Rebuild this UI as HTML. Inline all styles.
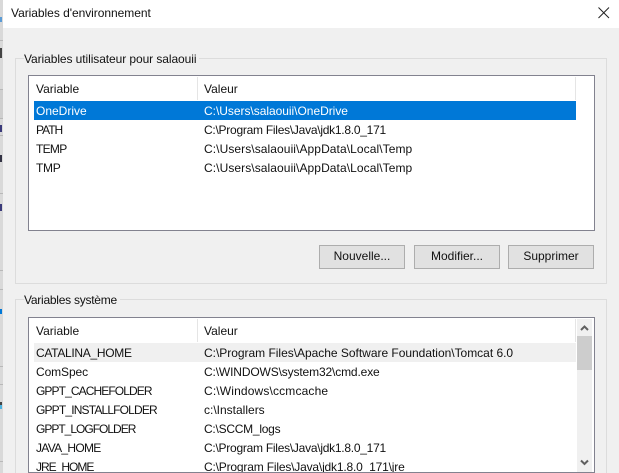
<!DOCTYPE html>
<html><head><meta charset="utf-8"><style>
html,body{margin:0;padding:0;width:619px;height:473px;overflow:hidden;background:#f0f0f0}
body{position:relative;font-family:"Liberation Sans",sans-serif;font-size:12px;color:#111}
div{position:absolute;box-sizing:border-box}
.t{white-space:nowrap;line-height:16px;height:16px}
.btn{background:#e1e1e1;border:1px solid #adadad;height:24px;width:86px;text-align:center;line-height:21px;top:245px}
.m{left:0;width:3px;height:1px;background:#b8b8b8}
.d{left:0;width:2px;background:#444}
</style></head><body>
<div style="left:0;top:0;width:3px;height:473px;background:#d9d9d9"></div>
<div style="left:0;top:90px;width:3px;height:28px;background:#cfcfcf"></div>
<div class="m" style="top:40px"></div><div class="m" style="top:89px"></div><div class="m" style="top:118px"></div><div class="m" style="top:135px"></div><div class="m" style="top:193px"></div><div class="m" style="top:270px"></div><div class="m" style="top:289px"></div><div class="m" style="top:366px"></div><div class="m" style="top:384px"></div><div class="m" style="top:461px"></div>
<div class="d" style="top:17px;height:5px;background:#5b9bd5"></div>
<div class="d" style="top:48px;height:10px"></div>
<div class="d" style="top:125px;height:7px;background:#3a3a7a"></div>
<div class="d" style="top:155px;height:7px;background:#334"></div>
<div class="d" style="top:204px;height:7px;background:#3a3a7a"></div>
<div class="d" style="top:309px;height:5px;background:#0078d7"></div>
<div class="d" style="top:402px;height:3px"></div>
<div class="d" style="top:405px;height:4px;background:#4fb3e0"></div>
<div style="left:3px;top:0;width:616px;height:28px;background:#fff"></div>
<div class="t" style="left:11px;top:5px;letter-spacing:-.04px">Variables d'environnement</div>
<svg style="position:absolute;left:598px;top:7px" width="12" height="12"><path d="M.5 .5L11 11M11 .5L.5 11" stroke="#222" stroke-width="1" fill="none"/></svg>

<div style="left:15px;top:58px;width:592px;height:226px;border:1px solid #dcdcdc"></div>
<div class="t" style="left:24px;top:51px;background:#f0f0f0;padding-right:3px;letter-spacing:-.08px">Variables utilisateur pour salaouii</div>
<div style="left:28px;top:75px;width:567px;height:156px;background:#fff;border:1px solid #82828f"></div>
<div style="left:197px;top:77px;width:1px;height:23px;background:#e5e5e5"></div>
<div style="left:575px;top:77px;width:1px;height:23px;background:#e5e5e5"></div>
<div class="t" style="left:36px;top:81px">Variable</div>
<div class="t" style="left:204px;top:81px">Valeur</div>
<div style="left:34px;top:101px;width:542px;height:19px;background:#0078d7"></div>
<div class="t" style="left:36px;top:103px;color:#fff">OneDrive</div>
<div class="t" style="left:204px;top:103px;color:#fff;letter-spacing:-.03px">C:\Users\salaouii\OneDrive</div>
<div class="t" style="left:36px;top:122px;letter-spacing:-1px">PATH</div>
<div class="t" style="left:204px;top:122px;letter-spacing:-.26px">C:\Program Files\Java\jdk1.8.0_171</div>
<div class="t" style="left:36px;top:141px;letter-spacing:-.7px">TEMP</div>
<div class="t" style="left:204px;top:141px;letter-spacing:.08px">C:\Users\salaouii\AppData\Local\Temp</div>
<div class="t" style="left:36px;top:160px;letter-spacing:-.3px">TMP</div>
<div class="t" style="left:204px;top:160px;letter-spacing:.08px">C:\Users\salaouii\AppData\Local\Temp</div>
<div class="btn" style="left:319px">Nouvelle...</div>
<div class="btn" style="left:414px">Modifier...</div>
<div class="btn" style="left:508px">Supprimer</div>

<div style="left:15px;top:299px;width:592px;height:180px;border:1px solid #dcdcdc"></div>
<div class="t" style="left:24px;top:292px;background:#f0f0f0;padding-right:3px;letter-spacing:-.25px">Variables système</div>
<div style="left:28px;top:317px;width:567px;height:156px;background:#fff;border:1px solid #82828f"></div>
<div style="left:197px;top:319px;width:1px;height:23px;background:#e5e5e5"></div>
<div style="left:575px;top:319px;width:1px;height:23px;background:#e5e5e5"></div>
<div class="t" style="left:36px;top:323px">Variable</div>
<div class="t" style="left:204px;top:323px">Valeur</div>
<div style="left:34px;top:343px;width:542px;height:19px;background:#f0f0f0"></div>
<div class="t" style="left:36px;top:345px;letter-spacing:-.3px">CATALINA_HOME</div>
<div class="t" style="left:204px;top:345px;letter-spacing:-.02px">C:\Program Files\Apache Software Foundation\Tomcat 6.0</div>
<div class="t" style="left:36px;top:364px;letter-spacing:-.1px">ComSpec</div>
<div class="t" style="left:204px;top:364px;letter-spacing:-.14px">C:\WINDOWS\system32\cmd.exe</div>
<div class="t" style="left:36px;top:383px;letter-spacing:-.9px">GPPT_CACHEFOLDER</div>
<div class="t" style="left:204px;top:383px;letter-spacing:.15px">C:\Windows\ccmcache</div>
<div class="t" style="left:36px;top:402px;letter-spacing:-.83px">GPPT_INSTALLFOLDER</div>
<div class="t" style="left:204px;top:402px">c:\Installers</div>
<div class="t" style="left:36px;top:421px;letter-spacing:-1px">GPPT_LOGFOLDER</div>
<div class="t" style="left:204px;top:421px;letter-spacing:-.25px">C:\SCCM_logs</div>
<div class="t" style="left:36px;top:440px;letter-spacing:-.7px">JAVA_HOME</div>
<div class="t" style="left:204px;top:440px;letter-spacing:-.26px">C:\Program Files\Java\jdk1.8.0_171</div>
<div style="left:29px;top:458px;width:548px;height:14px;overflow:hidden">
<div class="t" style="left:7px;top:1px;letter-spacing:-1px">JRE_HOME</div>
<div class="t" style="left:175px;top:1px;letter-spacing:-.18px">C:\Program Files\Java\jdk1.8.0_171\jre</div></div>
<div style="left:577px;top:319px;width:15px;height:153px;background:#f0f0f0"></div>
<div style="left:577px;top:336px;width:15px;height:34px;background:#cdcdcd"></div>
<svg style="position:absolute;left:580px;top:325px" width="9" height="7"><path d="M1 5L4.5 1.5L8 5" stroke="#606060" stroke-width="2" fill="none"/></svg>
<svg style="position:absolute;left:580px;top:459px" width="9" height="7"><path d="M1 1.5L4.5 5L8 1.5" stroke="#606060" stroke-width="2" fill="none"/></svg>
</body></html>
